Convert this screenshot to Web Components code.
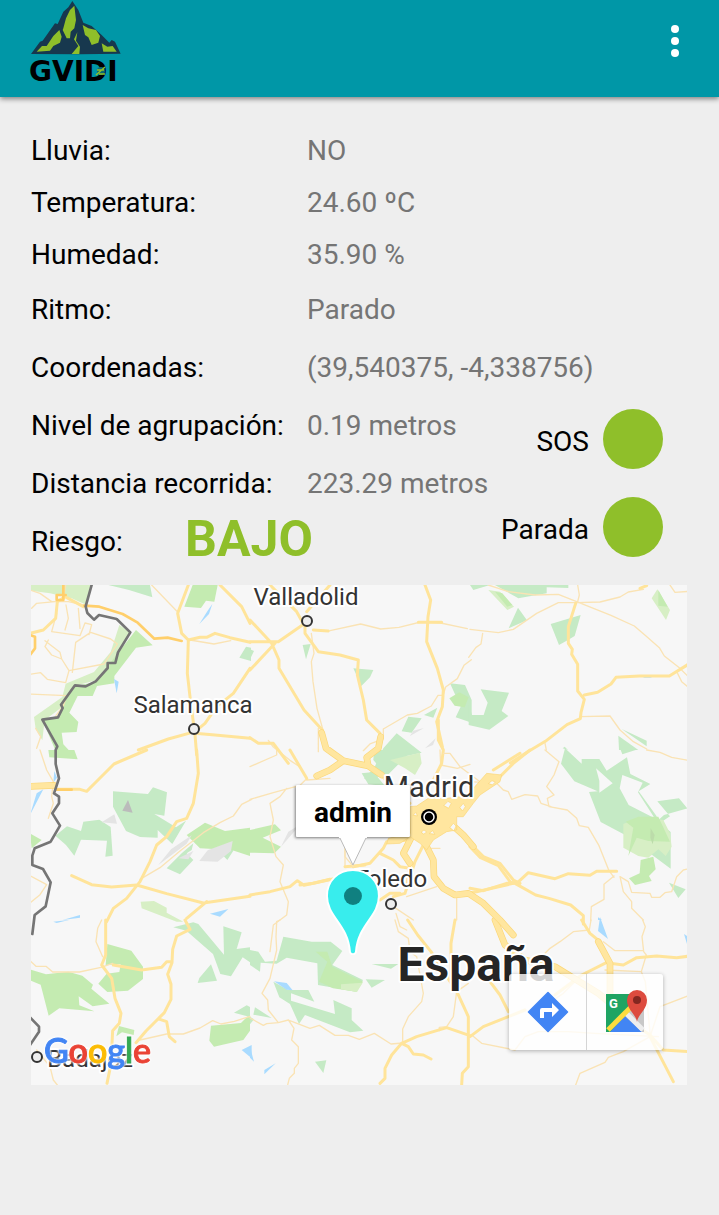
<!DOCTYPE html>
<html lang="es">
<head>
<meta charset="utf-8">
<meta name="viewport" content="width=device-width, initial-scale=1">
<title>GVIDI</title>
<style>
  html, body { margin: 0; min-height: 100%; background: #eeeeee; }
  body { font-family: Roboto, "Liberation Sans", sans-serif; font-size: 28px; line-height: 32px; color: #000; }
</style>
</head>
<body>
<gvidi-app></gvidi-app>

<template id="tpl-app">
  <style>
    :host { display: block; }
    main { padding: 28px 32px 40px 31px; }
    .lower { display: flex; justify-content: space-between; }
    .rows { flex: 1; min-width: 0; }
    .status { display: flex; flex-direction: column; gap: 28px; padding: 12px 24px 0 0; }
    route-map { margin-top: 14px; }
  </style>
  <app-bar></app-bar>
  <main>
    <data-row compact label="Lluvia:">NO</data-row>
    <data-row compact label="Temperatura:">24.60 ºC</data-row>
    <data-row compact label="Humedad:">35.90 %</data-row>
    <data-row label="Ritmo:">Parado</data-row>
    <data-row label="Coordenadas:">(39,540375, -4,338756)</data-row>
    <div class="lower">
      <div class="rows">
        <data-row label="Nivel de agrupación:">0.19 metros</data-row>
        <data-row label="Distancia recorrida:">223.29 metros</data-row>
        <data-row risk label="Riesgo:">BAJO</data-row>
      </div>
      <div class="status">
        <status-light>SOS</status-light>
        <status-light>Parada</status-light>
      </div>
    </div>
    <route-map>
      <map-pin>admin</map-pin>
      <map-tools></map-tools>
    </route-map>
  </main>
</template>

<template id="tpl-bar">
  <style>
    :host { display: block; position: relative; background: #0097a7; box-shadow: 0 2px 5px rgba(0,0,0,.45); }
    header { display: flex; justify-content: space-between; align-items: flex-start; padding: 0 24px 0 29px; min-height: 97px; box-sizing: border-box; }
    .logo { display: block; width: 96px; height: 88px; }
    .logo text { font: bold 28px "DejaVu Sans", sans-serif; }
    button { border: 0; padding: 0; margin-top: 20px; width: 40px; height: 42px; background: none; cursor: pointer; }
    button svg { display: block; }
  </style>
  <header>
    <svg class="logo" viewBox="29 0 96 88" role="img" aria-label="GVIDI">
      <g transform="translate(20 0) scale(.33333)">
        <path fill="#17384e" d="M33 162 60 125l8-3 37-52 8 2 17-37 15-13L157 3l18 27 15 38 25 10 30 27 23 23 7-8 10 5 17 36-122 2z"/>
        <g fill="#8fbf2a">
          <path d="m50 155 16-17h14l20-30 18-18 7 20-5 18-20 10-10 14z"/>
          <path d="m130 85 8-30 12-25 13-13 5 43-5 25-11 10-2 20h-10l-12-25z"/>
          <path d="m188 75 17 10 23 5 12 18-5 20-20 7-10-23-10-7z"/>
          <path d="m172 97-10 21 13 20-20 24h23l2-22-12-18z"/>
          <path d="m245 130 17 10 16-2 12 17h-40z"/>
        </g>
      </g>
      <text x="29" y="81">GVIDI</text>
      <circle cx="101" cy="71" r="4" fill="#0c6674"/>
      <path d="m96 75 9-8M97 70h7M99 74h6" stroke="#8fbf2a" stroke-width="1.5"/>
    </svg>
    <button type="button" aria-label="Más opciones">
      <svg width="40" height="42" viewBox="0 0 40 42" fill="#fff"><circle cx="20" cy="9" r="4"/><circle cx="20" cy="21" r="4"/><circle cx="20" cy="33" r="4"/></svg>
    </button>
  </header>
</template>

<template id="tpl-row">
  <style>
    :host { display: grid; grid-template-columns: 276px 1fr; align-items: center; height: 58px; white-space: nowrap; }
    :host([compact]) { height: 52px; }
    :host([risk]) { grid-template-columns: 154px 1fr; }
    .value { color: #757575; }
    :host([risk]) .value { color: #8fbf2a; font-size: 50px; font-weight: 700; line-height: 52px; padding-bottom: 6px; }
  </style>
  <span class="label"></span><span class="value"><slot></slot></span>
</template>

<template id="tpl-light">
  <style>
    :host { display: flex; justify-content: flex-end; align-items: center; gap: 14px; }
    .name { padding-top: 6px; }
    i { display: block; width: 60px; height: 60px; border-radius: 50%; background: #8fbf2a; }
  </style>
  <span class="name"><slot></slot></span><i></i>
</template>

<template id="tpl-pin">
  <style>
    :host { position: absolute; left: calc(50% - 6px); top: 200px; display: flex; flex-direction: column; align-items: center; transform: translateX(-50%); }
    .bubble { background: #fff; padding: 12px 18px 8px; font-weight: 700; box-shadow: 0 1px 3px rgba(0,0,0,.5); border-radius: 1px; }
    svg { display: block; }
  </style>
  <div class="bubble"><slot></slot></div>
  <svg width="60" height="118" viewBox="0 0 60 118">
    <path d="M17 1 30 28 43 1" fill="#fff" stroke="#bbb" stroke-width="1"/>
    <path d="M16-2h28v3H16z" fill="#fff"/>
    <path d="M30 33c-15 0-26 11-26 26 0 21 21 28 23 56 1 3 5 3 6 0 2-28 23-35 23-56 0-15-11-26-26-26z" fill="#38eded" stroke="#fff" stroke-width="2"/>
    <circle cx="30" cy="59" r="9" fill="#108080"/>
  </svg>
</template>

<template id="tpl-tools">
  <style>
    :host { position: absolute; right: 24px; bottom: 35px; display: flex; border-radius: 3px; background: rgba(255,255,255,.8); box-shadow: 0 1px 4px rgba(0,0,0,.3); }
    button { width: 77px; height: 76px; border: 0; padding: 0; background: none; cursor: pointer; }
    button + button { border-left: 1px solid #d5d5d5; }
    svg { display: block; margin: auto; }
    text { font: 700 13px Roboto, sans-serif; }
  </style>
  <button type="button" aria-label="Cómo llegar">
    <svg width="44" height="44" viewBox="0 0 44 44"><path d="M22 2.500 41.500 22 22 41.500 2.500 22z" fill="#4285f4" stroke="#4285f4" stroke-width="1.500" stroke-linejoin="round"/><path d="M14 28V20q0-2 2-2h10v-5l7 7-7 7v-5h-8v6z" fill="#fff"/></svg>
  </button>
  <button type="button" aria-label="Abrir en Google Maps">
    <svg width="44" height="48" viewBox="0 0 44 48">
      <path d="M3 6h38v38H3z" fill="#1fa463"/>
      <path d="m22 25 19-17v36H22z" fill="#c8c8c8"/>
      <path d="m22 28 17 16H7z" fill="#4285f4"/>
      <path d="m23 25 17 17" stroke="#eee" stroke-width="5"/>
      <path d="M5 42 28 19" stroke="#fddc3f" stroke-width="5"/>
      <text x="6" y="20" fill="#fff">G</text>
      <path d="M35 34c-1-8-10-12-10-22a10 10 0 0 1 20 0c0 10-9 14-10 22z" transform="translate(-1 0)" fill="#dd4b3e"/>
      <circle cx="34" cy="12" r="4" fill="#842720"/>
    </svg>
  </button>
</template>

<template id="tpl-map">
  <style>
    :host { display: block; position: relative; height: 500px; overflow: hidden; background: #f7f7f7; }
    .terrain { display: block; width: 100%; height: 100%; }
    .brand { position: absolute; left: 13px; bottom: 13px; font: 500 34px/44px Lato, sans-serif; text-decoration: none; filter: drop-shadow(0 0 1px #fff) drop-shadow(0 0 1px #fff); }
    .brand span { -webkit-text-stroke: 1px currentColor; }
    .c1 { color: #4285f4; } .c2 { color: #ea4335; } .c3 { color: #fbbc05; } .c4 { color: #34a853; }
    path { fill: none; stroke-linejoin: round; stroke-linecap: round; }
    .g { fill: #c5eac5; } .l { fill: #c4ebb1; } .p { fill: #d7efc5; } .s { fill: #e4e4e4; } .w { fill: #a9dbff; }
    .t { stroke: #fae3b4; stroke-width: 4; }
    .r { stroke: #ffe49a; stroke-width: 9; }
    .k { stroke: #fbd779; stroke-width: 20; }
    .m { stroke: #ffe69f; stroke-width: 16; }
    .city { fill: #ffe69f; stroke: #fbd779; stroke-width: 2; }
    .gap { fill: #f7f7f7; stroke: #fbd779; stroke-width: 2; }
    .o { stroke: #ffcf6b; stroke-width: 8; }
    .b { stroke: #757575; stroke-width: 8; }
    text { font-family: Roboto, sans-serif; font-size: 24px; fill: #333; stroke: #fff; stroke-width: 4px; stroke-linejoin: round; paint-order: stroke; text-anchor: middle; }
    .capital { font-size: 29px; }
    .country { font-size: 48px; font-weight: 700; fill: #252525; }
    .town { fill: #eee; stroke: #333; stroke-width: 2; }
  </style>
  <svg class="terrain" viewBox="31 585 656 500" preserveAspectRatio="xMidYMid slice" role="img" aria-label="Mapa de España">
    <!-- Green areas, relief and water; each group is one tile drawn at three times its size -->
    <g transform="translate(30 580) scale(.33333)">
      <path class="p" d="M0 15h185l-15 60-45-20-65-15-60-8zM268 135l35 22-50 80-60 65-60 16-33 60-56 43-7 60-20-35-5-35 85-60 10-40 85-35 50-60z"/>
      <path class="l" d="m318 150 50 46-50 7-65 85v22l-52 8-13 30h-45l-25 50 27 28-5 30-45 2 5 35 25 27H80L37 420l55-15 5-35 40-52 60-12 50-65z"/>
      <path class="g" d="M235 15h125l7 37-70-22zM628 233l20-33 15 3v40z"/>
      <path class="l" d="M488 15h75l-10 50-25-3-15 22-50-4z"/>
      <path class="w" d="m508 132 25-40 14-20-10 30zM252 297l14 8-6 35z"/>
    </g>
    <g transform="translate(250 580) scale(.33333)">
      <path class="g" d="m158 195 24-3-14 46zM310 265l60 5-10 22-26 26zM0 208l12 5-12 25zM475 410l40 5-30 43-30-4zM522 405l40-22-12 30zM600 310l45 5 20 45v68l-48-16 15-32z"/>
      <path class="l" d="m598 355 30-18 28 15-12 30-30-5z"/>
      <path class="s" d="m490 452 32-8-42 24zM525 505l32-30-8 20z"/>
      <path class="g" d="m440 460-40 45-28 60-30 30 28 18 20-35 20 10 60-60 45-10z"/>
    </g>
    <g transform="translate(470 580) scale(.33333)">
      <path class="g" d="M0 15h60l-50 15zM75 15h220v9l-65-2v18l-85 15zM144 83l27 38-55 24zM242 132l90-27-18 63-20 12-27 15zM32 328l85 10-22 55 20 15-57 41-62-14v-65l10 35h35l12-37z"/>
      <path class="p" d="m55 30 35 5 42 45-20 10zM545 55l17-27 38 62-12 30z"/>
      <path class="l" d="m75 35 22 5 30 35-15 5zM565 30l28 50-28-3z"/>
      <path class="g" d="m445 467 60 43h-58zM455 447l75 35v17zM278 505l6-5 10 10z"/>
      <path class="w" d="m518 293 20-8 18 2-15 6z"/>
    </g>
    <g transform="translate(30 750) scale(.33333)">
      <path class="g" d="m76 257 35-28 42 14 7-28 48-6 34 22 6 86-22 3 5-48-78-3-20 48-25-32zM249 124l105 8 15-20 42 15-8 70-30-5 65 40 30-20-41 70-44-42v23l-53-2-42-18-39-73zM410 355l45-45 35-30-5 20-15 10 20 20-40 43zM575 312l30-35 5 25-18 28z"/>
      <path class="l" d="M55 0h78l10 28-85-6zM0 250l35 20-30 25zM470 255l55-37 60 25 75-10v85l-55-18-95-5z"/>
      <path class="s" d="m215 217 38-24 8 28zM385 345l38-47 62-42-15 25zM445 325l45-22-15 25zM508 333l25-32 75-28-5 30-40 32z"/>
      <path d="m277 182 17-32 14 38z" style="fill:#bbb"/>
      <path class="p" d="m332 455 40-2 38 20v15l50 27h-20l-105-40z"/>
      <path class="w" d="m0 195 20-65 20-12zM540 491l55-14-25 23zM98 510l52-15v8zM70 98l3-35 8 20z"/>
    </g>
    <g transform="translate(250 750) scale(.33333)">
      <path class="l" d="m0 240 75-17 18 18-55 22 55 27-20 20-73-2z"/>
      <path class="s" d="m93 290 22-45 37-22-25 28z"/>
      <path class="g" d="m335 70 35-4 35 42-50-5zM372 0h100l-12 35-60 30-30-35z"/>
      <path class="p" d="m420 30 90-22 5 32-20 35-30-20z"/>
    </g>
    <g transform="translate(470 750) scale(.33333)">
      <path class="g" fill-rule="evenodd" d="m285-5 50 46v-14l53 0 22 35 61-40 10 50 60 30-35 22 54 75-5 30 45-30-38-45 65-9 25 30-70 20-20 18 40 33v110l-135-100-75-40-35-90 26-2-70-30-40-53zM388 92v36l40-28-50-45zM457 75l-8 40 27 50 78 40-50-78 14-29zM452 0h45l-40 13zM597 398l50 20-22 26z"/>
      <path class="p" d="m460 222 50-22 70 10 20 40 5 40-18 28-22-20-30 25-30-5-45-25z"/>
      <path class="l" d="m467 215 38-15 60 0 35 75-65-2-35-10-25 55 15-85zM512 330l38-10 7 38-20 20 8 15-50 12-18-20 32-15z"/>
      <path class="s" d="m542 235 12 20-6 28-7-20z" style="fill:#bcdcaa"/>
      <path class="w" d="m384 502 12 8h-12z"/>
    </g>
    <g transform="translate(30 920) scale(.33333)">
      <path class="l" d="M0 148l48 15 67-8 42 12 32 27-5 12 54 45-50 8-42-30 2 27 45 18-105-9-32 22-24-93-32-13zM232 72l72 20 35 48v37l-45 35-62 4-27-25 25-30 38-5 4-23-45 2zM267 318l46 12-2 15-35-8-17 12zM543 317l90-8 27-27v50l-20 28-88 20-14-18z"/>
      <path class="g" d="m430 22 60-15 15 5 77 92-2-85 55 18-15 50 40-5v45l-22-15-35 57-32-7-22-60-80-70zM543 133l18 49-58 7 5-15zM612 278l38-22 10 5v30z"/>
      <path class="w" d="m635 390 30-15v40zM70 5l50-6-40 10z"/>
    </g>
    <g transform="translate(250 920) scale(.33333)">
      <path class="g" d="m100 50 85 15 57 0 35 28-30 42 92 45-20 35-115-20-2-65-92-17-30 18-48-3-2 27-30-20v-45l25 5 20 30 35-3zM70 185l45 25 60 0 18 35-70-25v22l132 40-5-42 55 25v35l35 32-40 5-135-52-18 27-27-60-32-20zM347 178l58 2-40 23zM365 132h80l-22 14zM195 425l34-4-9 38zM15 262l50 32-55-10zM0 290l12 8-12 15z"/>
      <path class="l" d="m197 95 35 0 15 45 92 45-20 30-70-10-42-20 25-60z"/>
      <path class="p" d="m273 193 65-5-17 28-48-8z"/>
      <path class="w" d="m72 184 38 5 18 22-18-2zM0 380l12 45-12-12zM43 450l34-20-34 33z"/>
    </g>
    <path class="w" d="m600 917 8 22-10-8zM684 934l3 2v8z"/>

    <!-- Minor roads -->
    <g transform="translate(30 580) scale(.33333)">
      <path class="t" d="M0 30l30 10 35 25 50 0 60 13M75 65l-55 5-15 15M80 100l-15 55 85 12 15-38 20 5-8 30M145 85l5 60M108 75l7 40-10 35M55 180l-10 20 20 25 30 12-5-20-45-35M95 237l22 35 105-20 40-60-20-15-60-20-45 30-10 90M117 272l-10 36-55-10-20-20-32 5M0 342l110 5-10 30-22 30M20 505l12-35-15-25M365 15l75 78M110 0l-10 55M480 180l72 12 50-10"/>
    </g>
    <g transform="translate(250 580) scale(.33333)">
      <path class="t" d="m240 152 92-20 60 15 55-5 65-16 60 3 80 17M184 160l8 60-8 25 5 60 12 80 22 80M400 447l72-42 30-5 42-22 20-32h15l8-25 35-25 20-40 22-17M205 445v70M0 560l80-35 0-20M400 447l0 30-40 15-20 20"/>
    </g>
    <g transform="translate(470 580) scale(.33333)">
      <path class="t" d="M0 148l85 10 45-10 70-48 65-32 55 0 70-2 60-15 25-15 45-8M55 15l60 20 80 10 70-2 53 21 105 42 70 32 35 30 40 35 15 25 45 35 25 25M38 160l-5 32-15 10-22 30M323 15l5 30-5 20M600 15l15 22 45-3M620 275l15 30 30 25M330 410l90-2 30 42 40 35 40 22M224 485l5 25"/>
    </g>
    <g transform="translate(30 750) scale(.33333)">
      <path class="t" d="m30 0 20 60 20 35-5 45 5 20-15 45M0 377l50 27-20 30-30 25M330 388l60-35 60-50 70-55 50-30 40-20 25-35 30-15"/>
    </g>
    <g transform="translate(250 750) scale(.33333)">
      <path class="t" d="M0 148l70-20 80-22 20-20-20-35-30-20-50-40-15-20M110 115l-20 25-30 20 10 50-10 50 18 60 22 25-10 50 25 60-5 40-40 30-10 80M170 90l70-5M570 0l2 45 50 10 38-12M285 350l0-80M438 490l12 40 20 10"/>
    </g>
    <g transform="translate(470 750) scale(.33333)">
      <path class="t" d="m225 0 42 35-15 40-22 35 22 25-20 10 5 25 55 10 28 25 8 22 27 5 32 55 30 75 15 20M0 95l80 5 20 20 15 5 10 23 40-14 38 4 10 22 30 10M530 0l40 7 35 15 55 10M432 378l-30 25v45l-38 22-2 42M450 380l10 45 25 30 0 20 35 35M450 380l25 15 10 32 55 3 5 12 25 0 15-14 20-3 15-45 20-20 25-6"/>
    </g>
    <g transform="translate(30 920) scale(.33333)">
      <path class="t" d="M0 122l18 17h30l20 17h80l65-14 35-12M215 0l-12 25-5 40 20 45M330 360l80-18 50 0 50-18 38-22 25 10 40-8 47-15M20 390l40 50 10 40 12 15"/>
    </g>
    <g transform="translate(250 920) scale(.33333)">
      <path class="t" d="M90 0 80 5l-2 45 2 40-20 85-24 45 17 20 2 30 30 38-35 3-10 5-40-22M85 308l30-8 18 7 47 18 28-9 47 30 40 0 33 12 45-18 50 32 35-3M115 300l17 25-7 35 20 20 0 50-12 15 0 15-15 15-5 20M435 0l10 35 30 20 5 40 20 15 20 110-5 25-40 45-17 37v45M620 215l-10 75-20 30-22 2v10M620 215l35-25"/>
    </g>
    <g transform="translate(470 920) scale(.33333)">
      <path class="t" d="m363 0-5 30-48 5-40 30-30 20-15 15M518 0l8 20-10 30 5 45 8 10-15 50 12 30 15 165M400 65l35 27 85 0M405 150l110 5M5 345l30 25 100 20 30-40 40-15 90 0 80 5 190 10M540 350l30-90 90-35M540 350l-80 45-45 17-10 15-75 33-13 35M350 155l-30 25-40 40-90 60"/>
    </g>

    <!-- Main roads -->
    <g transform="translate(30 580) scale(.33333)">
      <path class="r" d="m0 160 40-10 37-35 5-50 23-15 55 30M475 15l-32 85 12 60 20 20-3 100 8 70 15 115 5 60M475 180l35-8 20 0 25-12 45 13 60 14M570 15l65 65 25 50M495 455l30-25 35-50 50-40 50-75M495 460l60 5 105 10M495 455l-80 22-90 33"/>
      <path class="o" d="m163 77 45 3 70 22 45 26 50 48 40-3 42 10M100 15v45l-20 0 0-15 27 0M0 165l15 5v35l-15 20"/>
    </g>
    <g transform="translate(250 580) scale(.33333)">
      <path class="r" d="M60 15l80 80 25 45 0 20 40 55 65 10 55 15-3 45 18 75 10 60 40 40M240 15l-70 80M0 120l65 70 22 50 0 25 75 125 55 60M165 130l-80 55-85 0M75 190l-75 80M190 150l45 3M525 15l17 45-8 50-4 75 32 80 18 65-3 50-17 45 17 75M505 127h70M0 473l25 17h45l45 60"/>
    </g>
    <g transform="translate(470 580) scale(.33333)">
      <path class="r" d="m317 70-22 70 0 50 12 18-2 15 18 30 0 80 20 25-10 40-2 18-40 18-65 50-50 30-55 35M343 345l40-8 40-25 15-20 70-4 45 0 45 0 65-40M510 25l20-8"/>
    </g>
    <g transform="translate(30 750) scale(.33333)">
      <path class="r" d="m350 0-98 42-60 60-22 22-20-6H85M500 0l5 70-15 90-20 45-30 10-30 45-30 25-20 50-30 60-40 50-40 30-20 40M125 377l60 27 60 7 75-6 90 26 110 28 140-20M530 455l-60 50"/>
      <path class="k" d="m0 109 72-3"/><path class="m" d="m0 109 72-3"/><path class="o" d="M80 119h45"/>
    </g>
    <g transform="translate(250 750) scale(.33333)">
      <path class="r" d="M120 0l50 85M0 435l60-10 60-15 22-18 20 14 90-20M285 350l60-5"/>
    </g>
    <g transform="translate(470 750) scale(.33333)">
      <path class="r" d="m180 0-50 40-40 40M0 290l30 32 55 25 37 50 13 3 62 35 40 10 65 20 38 32v25M0 415l40 7 70-22 30 0 35-32 80 18 40-15 65 5 20-12 60 0"/>
    </g>
    <g transform="translate(30 920) scale(.33333)">
      <path class="r" d="M227 0v105l-12 30 30 40 10 60 18 45-5 30-20 22-5 100-12 58M465 0l15 28-40 20-12 40-2 40-13 35 10 30 0 45-20 40-55 55-30 35M425 125h-15l-15 17-60 8-85-15M390 298l20 7 8 45 17 15"/>
    </g>
    <g transform="translate(250 920) scale(.33333)">
      <path class="r" d="m473 0 30 45 40 50 80 125 32 70v150l-18 20-2 35M615 0l-12 70 0 100M390 490l15-15 0-30 20-40 30-35 45-20 90-27 70 24M455 370l20 10 15 22 30 3 23 12"/>
    </g>
    <g transform="translate(470 920) scale(.33333)">
      <path class="r" d="m335 0 25 40 30 25M0 350l40-30 75-30 50-20M115 275l-25-50-30-40-40-30M420 130l40 5 40-22 60-5 60 5 40-5M415 125l-80 40-80 60M540 350l70 135M430 270l110 75 40 45 80 5"/>
      <path class="k" d="m75 0 30 75 60 45 90 20 130 80 85 70M385 65l35 65 0 105"/>
      <path class="m" d="m75 0 30 75 60 45 90 20 130 80 85 70M385 65l35 65 0 105"/>
    </g>

    <!-- Madrid, its ring roads and the motorways that leave it -->
    <g transform="translate(300 720) scale(.33333)">
      <path class="r" d="M235 155l40 45 55 50M415 0v60l15 30-5 40-25 50M580 150l80-50M520 380l30 30 50 20 40 50 20 10M465 525l65-10 110-25M160 440l50-10 40-45 10-20 70-5M240 400l40 20 20 20 30 5M370 375l-25 50-30 95-35 10M330 430l-10 70M240 540l30-20 30 0M0 495l40-5 50-12"/>
      <path class="t" d="M430 100l20 0 30 40 60 45M380 385l40 0M160 440l-25-30 0-30M280 560l60 40M470 530l0 70M320 530l90-30"/>
      <path class="k" d="M65 38l13 47 52 37 75 16-5-26 35-27 7-35M130 122l-40 28-40 18M205 138l40 27M440 300l50 45 30 35M380 380l20 40 2 50 28 35 35 20 40-5 45 30 50 50 40 45M335 350l-25 50 20 30"/>
      <path class="m" d="M65 38l13 47 52 37 75 16-5-26 35-27 7-35M130 122l-40 28-40 18M205 138l40 27M440 300l50 45 30 35M380 380l20 40 2 50 28 35 35 20 40-5 45 30 50 50 40 45M335 350l-25 50 20 30"/>
      <path class="city" d="m330 260 20-2 35-23h55l60-7 60-68 45 5-5 20-60 40-20 25-30 40h-20v40l-30 5-40 25-20 30-20-20-30-20-30 20-40 2 5-17 65-15z"/>
      <path class="gap" d="m432 256 12-12 10 6-8 14zM450 322l10-12 8 8-6 14zM388 340l10-8 6 10zM364 336l8-6 8 6-8 6zM566 190l10-8 10 4-8 8zM480 262l10-12 6 10-8 12zM340 285l8-8 4 10z"/>
    </g>

    <!-- Border with Portugal -->
    <g transform="translate(30 580) scale(.33333)"><path class="b" d="M185 15 167 79l5 20 20 20 15-14 53 12 41 40-37 60-8 32h-23v15l-36 40-30 15-32-3-42 58 5 10-14 28-47 7 45 80-5 11v42l10 43-15 45 15 10v20l-20 30 23 37-28 48-48 20-7 22v28l32 12 23 40-15 72-33 26-7 57M0 1312l27 28v15l-27 40"/></g>

    <g>
      <text x="306" y="605">Valladolid</text><text x="193" y="713">Salamanca</text>
      <text class="capital" x="429" y="797">Madrid</text><text x="391" y="887">Toledo</text>
      <text x="90" y="1067">Badajoz</text><text class="country" x="476" y="981">España</text>
      <circle class="town" cx="307" cy="621" r="5"/><circle class="town" cx="194" cy="729" r="5"/>
      <circle class="town" cx="391" cy="904" r="5"/><circle class="town" cx="37" cy="1057" r="5"/>
      <circle cx="429" cy="817" r="8"/><circle cx="429" cy="817" r="5" fill="none" stroke="#fff" stroke-width="1.500"/>
    </g>
  </svg>
  <a class="brand" href="#mapa" aria-label="Google"><span class="c1">G</span><span class="c2">o</span><span class="c3">o</span><span class="c1">g</span><span class="c4">l</span><span class="c2">e</span></a>
  <slot></slot>
</template>

<script>
  class TemplateElement extends HTMLElement {
    constructor() {
      super();
      this.attachShadow({ mode: 'open' })
        .append(document.getElementById(this.constructor.template).content.cloneNode(true));
    }
  }
  class AppBar extends TemplateElement { static template = 'tpl-bar'; }
  class DataRow extends TemplateElement {
    static template = 'tpl-row';
    connectedCallback() {
      this.shadowRoot.querySelector('.label').textContent = this.getAttribute('label');
    }
  }
  class StatusLight extends TemplateElement { static template = 'tpl-light'; }
  class MapPin extends TemplateElement { static template = 'tpl-pin'; }
  class MapTools extends TemplateElement { static template = 'tpl-tools'; }
  class RouteMap extends TemplateElement { static template = 'tpl-map'; }
  class GvidiApp extends TemplateElement { static template = 'tpl-app'; }
  customElements.define('app-bar', AppBar);
  customElements.define('data-row', DataRow);
  customElements.define('status-light', StatusLight);
  customElements.define('map-pin', MapPin);
  customElements.define('map-tools', MapTools);
  customElements.define('route-map', RouteMap);
  customElements.define('gvidi-app', GvidiApp);
</script>
</body>
</html>
